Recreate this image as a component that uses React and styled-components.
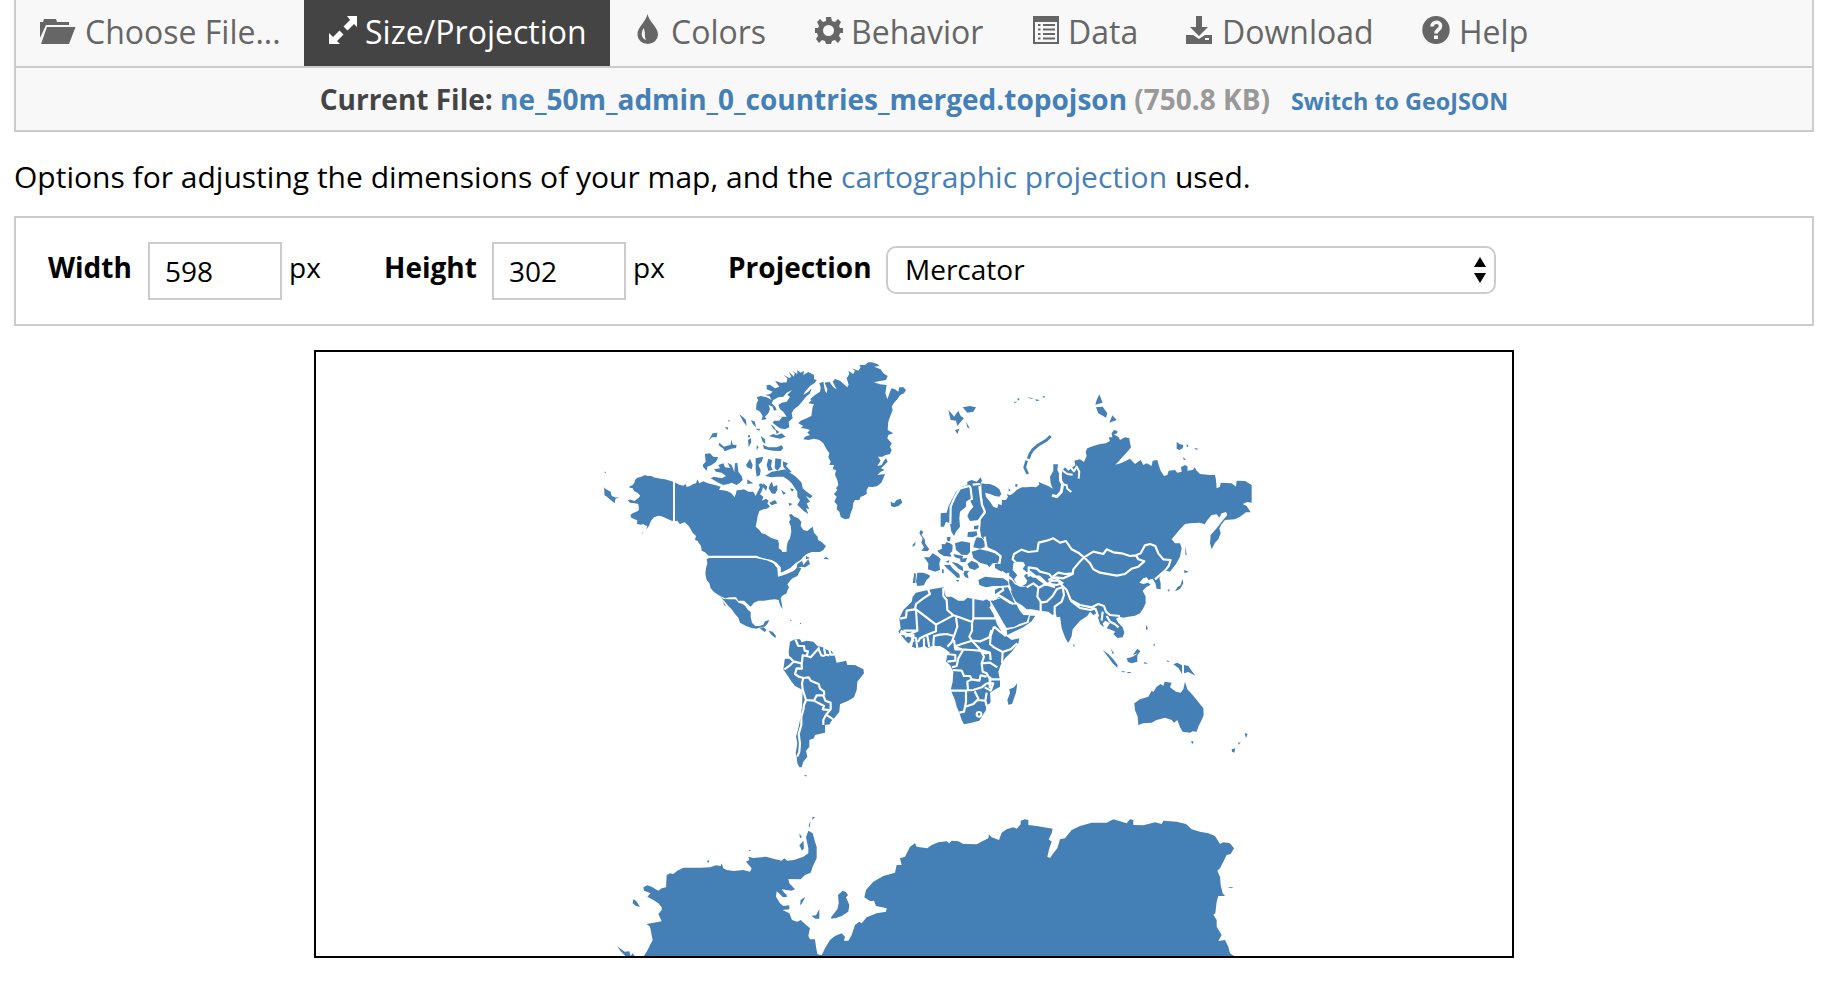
import React, { useState } from 'react';
import styled, { createGlobalStyle } from 'styled-components';

const GlobalStyle = createGlobalStyle`
  * {
    box-sizing: border-box;
  }

  body {
    margin: 0;
    background: white;
    color: black;
    font-family: 'Open Sans', sans-serif;
    font-size: 28px;
    overflow: hidden;
  }
`;

const Page = styled.div`
  width: 1800px;
  margin-left: 14px;
`;

const Header = styled.header`
  height: 132px;
  border: 2px solid #ccc;
  border-top: none;
  background: #f8f8f8;
`;

const Nav = styled.nav`
  display: flex;
  height: 68px;
  border-bottom: 2px solid #ccc;
`;

const Tab = styled.button`
  display: flex;
  flex-shrink: 0;
  width: ${props => props.$width}px;
  height: 66px;
  padding: 10px 0 0 24px;
  border: none;
  background: ${props => (props.$active ? '#444' : 'transparent')};
  color: ${props => (props.$active ? 'white' : '#666')};
  font-family: inherit;
  font-size: 32px;
  line-height: 44px;
  white-space: nowrap;
  cursor: pointer;
`;

const TabIcon = styled.svg`
  flex-shrink: 0;
  width: ${props => props.$width}px;
  height: 32px;
  margin: 4px 8px 0 0;
  fill: currentColor;
`;

const CurrentFile = styled.div`
  display: flex;
  align-items: baseline;
  justify-content: center;
  padding-top: 11px;
  line-height: 40px;
  font-weight: bold;
  color: #444;
  white-space: pre;
`;

const Link = styled.a`
  color: #4480b6;
  text-decoration: none;
  cursor: pointer;
`;

const SwitchLink = styled(Link)`
  margin-left: 21px;
  font-size: 23.33px;
`;

const FileSize = styled.span`
  color: #999;
`;

const Description = styled.p`
  margin: 25px 0 19px;
  line-height: 40px;
  font-size: 30.03px;
  white-space: nowrap;
`;

const Options = styled.form`
  display: flex;
  align-items: flex-start;
  height: 110px;
  padding: 24px 0 0 32px;
  border: 2px solid #ccc;
`;

const Label = styled.label`
  width: ${props => props.$width}px;
  padding-top: 5px;
  line-height: 40px;
  font-weight: bold;
`;

const NumberInput = styled.input`
  width: 134px;
  height: 58px;
  padding: 0 15px;
  border: 2px solid #ccc;
  font-family: inherit;
  font-size: 28px;
`;

const Unit = styled.span`
  width: ${props => props.$width}px;
  padding: 5px 0 0 7px;
  line-height: 40px;
`;

const SelectBox = styled.button`
  display: flex;
  align-items: center;
  justify-content: space-between;
  width: 610px;
  height: 48px;
  margin-top: 4px;
  padding: 0 7px 0 17px;
  border: 2px solid #ccc;
  border-radius: 10px;
  background: white;
  color: black;
  font-family: inherit;
  font-size: 28px;
  line-height: 38px;
`;

const SelectValue = styled.span`
  padding-bottom: 2px;
`;

const SelectArrows = styled.svg`
  width: 14px;
  height: 26px;
`;

const MapFrame = styled.div`
  width: 1200px;
  height: 608px;
  margin: 24px auto 0;
  border: 2px solid black;
`;

const MapSvg = styled.svg`
  display: block;
  width: 1196px;
  height: 604px;
`;

const Land = styled.path`
  fill: #4480b6;
`;

const Water = styled.path`
  fill: white;
`;

const Border = styled.path`
  fill: none;
  stroke: white;
  stroke-width: ${props => props.$width || 6.5};
  stroke-linejoin: round;
`;

const Ridge = styled.path`
  fill: none;
  stroke: #4480b6;
  stroke-width: ${props => props.$width};
  stroke-linejoin: round;
`;

const icons = {
  folder: (
    <TabIcon $width={37} viewBox="0 0 37 32">
      <path d="M0 24V8h3l1-3h12l1 3h12v3H6Z" />
      <path d="M7 13h28.500l-6.500 17H1Z" />
    </TabIcon>
  ),
  resize: (
    <TabIcon $width={29} viewBox="0 0 29 32">
      <path d="M19 2h10v11l-3-3-6.500 6.500-4-4L22 6ZM11.500 16.500l4 4L9 27l3 3H1V19l4 4Z" />
    </TabIcon>
  ),
  tint: (
    <TabIcon $width={29} viewBox="0 0 29 32">
      <path d="M13.500 0C15 8 24 13 24 20.500a10.300 9.500 0 0 1-20.600 0C3.400 13 12 8 13.500 0Z" />
      <path d="M9.500 14c-3 6-2 10 2.500 12-2-4 0-7-2.500-12Z" fill="#f8f8f8" />
    </TabIcon>
  ),
  cog: (
    <TabIcon $width={29} viewBox="0 0 29 32">
      <path
        fillRule="evenodd"
        d="M12 3h5l1 4 3 1 3-3 3 3-2 4 1 2h3v5h-3l-1 3 2 3-3 4-3-3-3 1-1 3h-5l-1-3-3-1-3 3-3-4 2-3-1-3H1v-5h3l1-2-2-4 3-3 3 3 3-1ZM14.500 11a5.500 5.500 0 1 0 0 11 5.500 5.500 0 0 0 0-11Z"
      />
    </TabIcon>
  ),
  list: (
    <TabIcon $width={29} viewBox="0 0 29 32">
      <path fillRule="evenodd" d="M2 2h26v28H2ZM4 8v20h22V8Z" />
      <path d="M7 10h2.500v2H7Zm5 0h12v2H12ZM7 14.500h2.500v2H7Zm5 0h12v2H12ZM7 19h2.500v2H7Zm5 0h12v2H12ZM7 23.500h2.500v2H7Zm5 0h12v2H12Z" />
    </TabIcon>
  ),
  download: (
    <TabIcon $width={30} viewBox="0 0 30 32">
      <path d="M12 2h6v11h6l-9 9-9-9h6Z" />
      <path fillRule="evenodd" d="M2 21h7l6 4 6-4h7v9H2ZM21 24v2h4v-2Z" />
    </TabIcon>
  ),
  help: (
    <TabIcon $width={30} viewBox="0 0 30 32">
      <ellipse cx="15" cy="16" rx="13.700" ry="14" />
      <path d="M11 12.500C11 7 19.500 7 19.500 12c0 4-4.500 3.500-4.500 7.500" fill="none" stroke="#f8f8f8" strokeWidth="3.600" />
      <path d="M13 21.500h4v3.500h-4Z" fill="#f8f8f8" />
    </TabIcon>
  )
};

const tabs = [
  { name: 'Choose File...', icon: 'folder', width: 288 },
  { name: 'Size/Projection', icon: 'resize', width: 306 },
  { name: 'Colors', icon: 'tint', width: 180 },
  { name: 'Behavior', icon: 'cog', width: 217 },
  { name: 'Data', icon: 'list', width: 153 },
  { name: 'Download', icon: 'download', width: 237 },
  { name: 'Help', icon: 'help', width: 160 }
];

const NorthAmerica = () => (
  <g transform="translate(590 350) scale(.33333)">
    <Land d="M250 395L240 392 225 388 212 386 190 382 185 378 172 378 165 375 152 381 142 383 135 390 133 398 128 405 117 410 120 413 128 415 133 424 142 428 150 436 148 442 140 448 134 453 122 449 113 450 120 458 134 460 145 462 147 480 142 484 128 490 121 496 124 503 134 508 142 511 141 522 152 524 160 522 165 526 172 528 168 538 160 546 174 532 177 527 183 512 192 502 205 497 215 499 228 505 245 512 250 513ZM158 548L164 544 152 556Z" />
    <Land d="M254 397L268 404 280 407 287 402 290 411 300 408 308 403 318 400 322 388 328 400 340 394 350 398 362 402 378 406 392 410 387 420 400 421 413 424 424 430 434 442 438 430 440 421 452 420 462 418 475 425 490 425 497 438 503 425 510 412 506 404 513 400 520 405 517 420 510 433 520 440 516 452 528 446 536 452 532 460 540 470 530 476 520 478 508 483 503 498 500 515 497 530 508 540 515 550 525 552 540 562 552 567 564 570 567 582 566 595 574 600 577 606 590 605 590 592 593 576 600 565 604 545 602 528 597 515 602 508 597 494 604 492 613 500 625 505 634 515 632 528 640 540 652 543 660 536 668 530 672 548 683 560 684 570 694 575 708 588 700 600 690 606 665 606 650 612 640 620 632 630 618 638 600 655 585 662 573 668 572 652 560 638 545 630 530 627 510 622 500 617 355 617 345 607 335 602 333 588 322 572 315 570 318 558 308 548 298 530 285 517 276 519 270 523 262 512 254 514Z" />
    <Border $width={6} d="M252 395V515" />
    <Land d="M356 624L498 624 515 628 530 631 550 640 562 655 564 680 575 677 590 672 612 662 622 652 634 655 622 678 608 685 602 690 592 703 597 712 592 722 590 730 576 738 572 745 575 760 578 778 570 765 566 750 555 748 540 749 522 752 505 752 492 758 482 770 470 760 462 752 445 752 438 742 420 742 405 745 395 740 385 735 372 726 362 715 358 700 350 690 346 672 348 655 352 640 350 628Z" />
    <Land d="M622 642L636 632 640 645 655 628 660 642 646 652 634 650 620 655ZM700 627L708 620 718 628ZM648 618L660 624 648 628Z" />
    <Land d="M388 738L400 747 418 748 436 748 446 758 458 762 466 768 474 780 482 786 482 800 486 818 496 828 508 828 520 824 525 814 538 810 532 822 524 830 512 832 500 836 485 834 468 828 450 818 445 803 435 792 425 778 415 768 405 755ZM398 752L408 768 403 766ZM508 834L520 832 530 840 524 846ZM535 842L548 845 558 858 556 864 545 855ZM600 808L606 812 601 812ZM630 819H633V822H630Z" />
    <Land d="M845 37L862 42 868 48 852 50 872 58 880 70 893 78 888 90 870 93 852 97 870 103 890 105 886 130 892 148 900 125 905 115 915 118 925 125 928 112 940 112 948 120 942 130 930 136 922 148 912 158 905 170 908 180 900 200 895 215 893 240 910 250 895 255 892 265 905 280 900 290 905 300 900 312 885 316 878 320 864 320 872 332 862 348 875 345 880 335 888 325 893 335 880 348 873 355 884 360 872 365 862 375 885 372 880 385 874 398 862 408 848 411 836 410 830 420 830 432 820 438 812 440 808 450 795 450 790 458 788 475 782 490 778 505 768 508 758 505 752 500 748 485 740 478 742 465 733 455 740 440 732 432 742 420 738 415 745 405 742 390 735 375 738 360 728 358 732 345 718 345 722 335 715 322 718 310 708 295 700 280 688 270 672 266 655 270 640 268 645 260 660 255 652 248 660 240 648 236 632 234 640 228 625 220 632 212 650 205 664 198 668 170 672 163 655 160 665 150 660 148 675 135 690 125 692 112 688 100 700 95 705 122 710 130 712 118 704 98 718 95 730 112 740 118 728 95 735 87 750 92 772 112 776 104 770 85 778 72 775 62 790 72 795 62 785 55 805 62 812 52 808 45 825 45 835 37Z" />
    <Land d="M530 105L540 104 555 115 568 110 560 100 555 92 572 98 590 97 592 85 580 74 598 84 604 80 596 65 612 80 614 70 606 62 622 72 622 60 632 68 642 62 640 75 655 66 672 75 672 88 680 90 675 98 660 108 645 125 640 135 655 125 665 115 660 130 648 140 636 155 625 168 612 178 605 190 608 205 596 215 598 232 585 238 570 235 560 228 548 218 552 212 568 212 576 202 560 195 570 200 590 200 580 185 570 178 565 165 575 158 590 155 600 140 592 135 606 120 590 128 580 140 565 142 550 150 545 160 556 170 560 180 552 182 548 170 536 165 540 178 535 190 525 200 530 208 515 210 518 198 510 185 498 178 500 160 505 150 500 142 512 138 530 142 545 150 538 138 525 135 540 132 548 125 530 118Z" />
    <Land d="M537 258L550 252 560 256 575 250 587 260 570 266 550 262ZM518 284L535 292 560 292 575 286 580 295 572 303 550 302 535 300 522 296ZM512 258L525 268 526 282 518 275ZM556 238L568 246 560 252ZM345 312L360 310 370 320 385 322 378 335 365 345 352 350 350 362 340 352 338 345 347 335ZM355 272L368 250 382 248 380 262 366 262ZM448 193L458 200 468 210 470 228 460 215ZM413 212L418 210 419 216ZM405 232L415 232 412 240ZM483 210L495 215 498 232 488 222ZM388 278L402 290 422 284 424 268 428 284 440 285 438 294 424 296 404 304 400 296 386 286ZM474 270L482 264 484 276 476 292ZM474 256H480V262H474ZM496 236L510 236 508 242ZM500 285L506 292 500 300ZM542 222L552 230 560 244 550 236Z" />
    <Land d="M385 345L400 340 405 352 420 354 413 338 425 345 433 366 435 340 442 338 445 365 455 378 458 390 448 400 440 405 425 398 415 402 400 405 385 398 362 385 372 380 395 385 408 378 395 368 378 365 372 358 390 355ZM468 345L480 326 488 345 485 358 472 352ZM497 325L520 320 515 335 505 345 512 360 510 375 500 380 497 360ZM472 388L482 395 490 400 472 402ZM535 326L546 330 543 348 548 360 535 362 530 345ZM556 325L574 328 572 350 562 362 554 354ZM578 334L594 340 588 348 605 366 596 368 580 350Z" />
    <Land d="M545 365L565 362 585 358 600 368 615 378 625 388 635 398 638 415 650 425 668 438 660 445 648 438 660 455 650 460 658 478 648 475 655 492 640 482 628 470 622 465 630 450 622 440 622 425 615 415 605 400 595 390 580 380 560 380 545 382 525 378ZM540 403L546 395 550 410 562 405 562 420 555 432 545 430 536 415ZM538 458L555 450 562 460 545 466ZM520 400L532 410 528 422 518 410ZM574 420L588 430 580 434ZM600 415L612 418 606 426ZM596 458L608 462 598 468Z" />
    <Land d="M42 412L48 418 62 425 65 438 78 443 88 440 76 448 74 460 62 450 48 438 44 437ZM42 365L48 366 46 370ZM902 455L912 460 920 450 932 446 937 458 925 468 912 472 903 468Z" />
  </g>
);

const SouthAmerica = () => (
  <g transform="translate(740 610) scale(.33333)">
    <Land d="M150 95L165 88 180 88 185 97 200 92 220 95 232 108 248 112 262 120 276 124 285 140 290 158 305 155 318 152 322 165 345 165 370 178 372 190 352 215 350 240 342 262 325 272 300 283 298 305 285 322 272 335 270 343 255 345 255 368 225 375 222 385 208 390 208 410 198 422 202 440 190 455 185 472 178 472 172 460 170 440 167 430 172 400 168 380 176 350 182 320 186 290 188 240 165 228 155 215 145 200 130 178 132 165 134 148 148 140 146 125ZM192 494L200 496 198 500Z" />
    <Border d="M133 143L148 142 160 154 184 160M133 178L150 166 160 156M166 88L175 108 192 108 194 122 204 124 200 138 188 136 185 165 186 176 170 175 165 192 176 200 190 204M200 138L212 142 228 124 238 112M236 118L244 136 254 138M252 115L256 134 268 136M268 120L272 134 282 134M190 204L206 202 212 212 236 222 240 236 252 244 253 256M190 204L186 220 188 238 198 270 192 285 190 300 184 320 184 345 176 372 180 400 178 425 172 440M198 270L222 272 230 256 250 256 256 272 272 278 272 298 258 314 250 330 250 345M222 272L252 288 248 298 268 300M258 314L280 328" />
  </g>
);

const Europe = () => (
  <g transform="translate(880 350) scale(.33333)">
    <Land d="M182 530L182 490 200 488 205 470 215 450 228 425 245 410 262 405 262 395 275 390 290 395 302 382 306 392 302 400 300 412 303 440 312 470 315 488 298 510 270 513 262 498 268 485 280 470 272 455 274 445 258 455 258 470 240 485 238 505 240 530 228 545 222 558 214 545 210 520 198 515 192 530Z" />
    <Border d="M211 522L212 470 225 440 240 415 268 408 272 415 276 450M278 404L300 402M298 408L302 440 306 465 315 486 296 512" />
    <Land d="M178 610L172 602 186 596 185 582 195 583 200 576 210 580 218 585 217 604 210 610 214 620 192 618ZM132 622L148 622 158 610 175 620 182 628 178 640 180 660 165 665 144 658 145 640ZM112 668L130 668 148 675 150 680 138 692 132 706 112 708 108 695ZM103 668L108 672 106 700 98 698ZM122 540L130 545 125 555 134 568 136 582 148 598 142 604 124 602 132 592 124 578 128 565 118 550ZM98 584L107 575 105 586 98 591ZM200 562L212 560 210 574 202 572Z" />
    <Land d="M225 580L245 574 270 578 270 606 262 615 245 614 228 600ZM284 575L290 562 305 564 314 575 314 592 300 596 280 592ZM275 605L300 598 320 602 345 610 360 622 355 638 338 640 328 652 322 644 300 638 280 624ZM264 546L290 544 292 556 278 562 262 560ZM282 528L296 526 294 538 282 538ZM262 642L275 632 292 640 298 652 284 660 268 655ZM220 612L250 618 245 628 225 622ZM196 636L208 630 206 638ZM240 626L262 624 256 636 242 636Z" />
    <Border d="M314 560L316 572 320 594 345 605 362 618 358 642" />
    <Land d="M192 645L210 644 220 658 238 672 240 682 232 684 216 668 202 656ZM214 635L232 640 248 650 250 664 236 656ZM254 662L268 662 262 670 266 685 256 682 250 672ZM228 690L238 690 234 696ZM186 658H191V670H186Z" />
    <Land d="M295 690L315 680 345 683 370 685 384 695 386 706 360 708 340 708 318 712 298 705Z" />
    <Land d="M345 720L356 714 384 712 396 738 404 760 390 758 366 740 345 748ZM332 752L345 750 362 744 390 762 410 764 418 780 430 795 447 796 440 815 418 822 404 830 380 834 370 818 360 800 345 775ZM380 840L404 834 446 818 450 797 466 797 455 814 430 832 400 846 382 855Z" />
    <Border d="M340 740L370 720 366 708M338 750L358 736 400 762" />
    <Land d="M205 180L216 192 222 200 235 182 242 198 252 205 245 212 232 228 228 212 212 210ZM248 172L270 168 288 172 280 185 262 188ZM225 240L238 236 232 252ZM258 215L270 236 262 232ZM658 133L668 158 646 164 650 150ZM648 172L668 170 682 190 678 203 655 190ZM697 196L710 210 688 218ZM402 156L412 154 404 160ZM412 145L420 146 414 152ZM440 140L462 146 452 146ZM465 148L480 150 470 154ZM486 140L495 138 493 144ZM386 415L392 422 386 424ZM406 402H412V410H406Z" />
    <Ridge $width={9} d="M512 258L500 270 475 285 458 300 450 312 445 326" />
    <Ridge $width={8} d="M440 332L434 352 443 372" />
  </g>
);

const Asia = () => (
  <g transform="translate(880 350) scale(.33333)">
    <Land d="M304 400L318 402 330 402 345 408 358 418 364 432 358 440 345 438 330 432 316 428 318 440 330 455 340 470 352 475 355 462 365 466 366 450 378 450 384 440 380 432 390 436 400 430 410 420 425 412 440 412 455 410 468 412 478 404 476 396 490 402 505 408 518 416 512 400 510 380 520 362 520 343 534 343 532 360 538 372 545 365 555 352 565 362 578 352 586 346 583 332 600 328 612 336 620 318 617 305 622 295 640 288 660 282 678 280 690 272 686 262 697 262 695 250 702 240 712 243 712 250 702 253 716 262 720 270 735 262 748 265 750 280 753 292 742 305 728 320 715 335 706 344 722 340 738 332 750 326 765 342 782 330 790 345 800 340 815 348 818 332 832 330 836 345 842 362 852 378 862 375 866 362 885 360 892 368 905 365 903 352 915 345 923 350 922 362 938 360 945 352 948 360 960 372 990 375 1005 375 1008 390 1010 415 1020 410 1022 398 1055 400 1068 410 1070 392 1095 393 1115 405 1115 458 1102 456 1088 462 1100 468 1112 487 1098 487 1080 500 1065 508 1035 510 1025 522 1018 535 1022 550 1015 568 1005 578 995 598 990 580 992 555 1010 535 1025 515 1042 495 1038 486 1025 490 1018 503 1010 493 995 495 982 510 974 523 960 518 930 520 915 522 900 538 875 568 885 580 900 580 905 595 900 620 888 642 870 665 858 662 845 672 838 684 842 700 842 718 830 716 826 700 818 686 806 690 800 682 790 685 778 698 790 702 805 698 812 704 798 712 788 722 797 740 797 760 790 775 780 790 765 797 745 800 730 803 718 800 708 806 715 818 728 832 733 848 728 862 712 864 700 852 706 845 695 840 680 835 690 820 676 812 668 820 672 832 660 822 655 805 650 790 640 795 630 785 622 798 600 812 578 838 575 858 570 870 564 878 555 862 545 835 542 812 540 800 530 802 528 792 518 795 505 785 480 782 455 778 440 778 425 765 408 755 398 738 390 715 384 700 386 685 395 690 404 702 420 710 440 710 425 706 408 700 398 688 382 672 362 664 345 654 345 642 357 640 362 620 345 606 322 596 316 572 304 560 300 540 302 520 302 508 318 488 310 465 305 435Z" />
    <Water d="M400 640L412 635 430 636 436 646 428 656 442 668 432 678 442 692 438 702 425 708 410 702 402 688 412 676 398 660Z" />
    <Border $width={9} d="M543 350L541 375 542 392 548 402 544 425 530 440 516 436" />
    <Border $width={6} d="M546 402L560 406 562 416 574 426M548 362L562 372 578 374M572 352L582 364 590 350 598 365 596 386" />
    <Border d="M410 640L398 628 402 612 425 599 445 606 472 603 476 578 500 572 520 565 540 578 558 573 575 598 595 608 612 622M612 622L640 605 670 612 680 598 700 607 725 610 750 618 768 616 782 610 795 586 810 582 826 588 835 610 850 628 872 630 866 648 855 662 825 688M612 622L630 640 640 658 660 668 710 677 735 672 755 656 775 650 793 634 775 628 768 616M612 622L595 640 580 658 578 672 550 685 528 682M446 680L446 652 470 656 480 665 508 672 515 682 535 668 555 672 578 670M446 662L480 690 500 705 515 692 535 692 550 700M440 668L460 680 478 680 505 705 525 712M440 712L460 700 475 712 472 740 482 755 482 784M475 714L500 700 530 705 545 700M482 758L500 755 518 738 530 718 546 712M524 796L524 770 545 755 552 735 548 712M528 682L545 705 560 720 572 750 600 765 635 772 655 762 672 768 678 785 690 795 720 798M572 752L600 774 632 780 646 775M646 775L655 800M668 785L665 812M680 798L690 815 704 822 716 832M365 665L396 688" />
    <Border $width={7} d="M505 690L525 682 548 702M384 668L384 700 392 722" />
  </g>
);

const Africa = () => (
  <g transform="translate(890 530) scale(.33333)">
    <Land d="M78 188L100 183 125 178 160 172 165 190 168 200 185 200 205 212 222 212 232 203 255 208 280 212 290 208 300 215 302 228 298 232 310 252 316 268 322 285 335 305 345 315 365 330 388 325 385 340 365 365 345 385 332 405 325 425 330 450 330 470 312 480 300 488 302 515 298 522 288 525 288 540 268 572 245 578 222 583 215 570 208 548 200 530 195 510 182 480 188 455 190 425 180 405 168 395 172 375 180 368 165 356 150 348 138 348 130 345 115 355 105 348 80 355 65 350 45 330 25 305 32 295 28 265 40 240 55 225 65 215 68 200Z" />
    <Border d="M114 178L120 192 100 205 78 222 75 238 50 242 48 262 30 266M78 238L82 302 40 302M78 238L138 284M138 284L190 256 172 240 170 210 160 198 160 174M190 256L208 262 245 275M250 207V265L246 278M250 265H316M246 278L246 302 238 320 246 332 215 342 192 350M198 262L202 290 192 318M138 284L138 304 108 316 90 325 84 336M192 318L170 312 150 314 132 318 130 345M192 318L186 335 172 350M192 330L196 358 215 358M192 350L215 358 245 360 268 362 285 370M246 332L272 334 298 322 304 300M246 332L272 360 300 368M312 290L302 318 300 342 312 352 338 366 362 358 382 340M312 290L330 305 348 318M338 366L336 400M275 366L282 380 275 400 300 398 322 412M285 370L300 368 302 390M275 400L278 425 290 430 300 448 330 448M188 420L215 422 222 438 240 438 245 448 232 455 234 480M180 482L215 482 250 480 275 472 290 460M245 448L268 452 272 436 290 440M228 482L228 515 222 545 208 548M226 530L250 522 262 510 285 512M254 484L266 508M290 460L310 460 302 482 284 472M290 488L286 512 290 528M45 320L85 300M32 302L60 318 78 325 82 355M55 345L72 330M102 325V355M112 318L118 352M218 362L205 385 200 408 186 412M170 372L196 375 196 392 172 395" />
    <Border $width={8} d="M300 440L300 475M30 310L70 316 62 350" />
    <Water d="M257 553A10 10 0 1 0 277 553A10 10 0 1 0 257 553Z" />
    <Land d="M263 553A4 4 0 1 0 271 553A4 4 0 1 0 263 553ZM382 460L378 488 366 522 355 524 352 510 360 490 358 478 372 472ZM550 342L555 348 550 350Z" />
  </g>
);

const Oceania = () => (
  <g transform="translate(890 530) scale(.33333)">
    <Land d="M733 520L750 508 775 500 785 482 790 486 800 470 812 462 820 468 824 455 845 458 840 472 858 485 872 488 880 478 885 455 892 478 908 495 928 520 940 535 941 555 935 570 925 590 920 605 908 604 900 608 878 605 870 592 862 570 852 578 845 570 825 563 800 570 785 578 760 580 745 585 743 560 735 540ZM903 634L911 634 907 643Z" />
    <Land d="M638 360L655 372 670 388 683 405 682 413 668 400 655 382ZM662 355L672 370 668 372ZM694 422L708 426 697 427ZM712 426H722V429H712ZM710 385L724 382 735 366 742 356 751 364 742 376 742 395 725 400 714 396ZM768 284L774 296 768 300ZM790 344L796 340 792 350ZM832 390L838 396 832 396ZM762 396L774 400 764 402ZM850 403L862 398 876 406 876 432 866 415ZM882 405L895 408 905 422 916 437 895 426 882 430Z" />
    <Water d="M708 377L728 380 744 370 730 374Z" />
    <Land d="M886 48L890 76 886 74ZM882 120L896 125 884 130ZM877 146L880 160 870 177 855 184 862 172 872 165ZM832 180L840 178 836 185ZM1064 609L1073 612 1068 624ZM1044 638L1052 637 1046 644ZM1025 658L1036 655 1033 668 1026 665Z" />
    <Land d="M860 -265L868 -258 880 -255 878 -245 868 -240 860 -244ZM890 -258L896 -252 890 -248ZM912 -247L926 -243 918 -241ZM878 -218L888 -212 882 -210Z" />
  </g>
);

const Antarctica = () => (
  <g transform="translate(590 780) scale(.33333)">
    <Land d="M160 530L170 515 188 480 183 455 180 440 170 432 215 424 205 402 215 390 215 382 205 370 190 360 172 350 182 340 162 332 160 322 172 316 185 320 192 325 205 332 215 325 228 322 230 285 240 280 250 282 262 272 280 263 330 263 360 262 378 256 392 258 395 250 400 265 410 270 432 273 460 270 480 275 485 265 468 245 478 240 475 230 490 234 528 230 550 236 575 242 583 235 592 242 612 240 640 230 655 220 655 205 648 172 655 152 668 160 675 185 680 200 680 235 668 260 662 278 645 285 632 298 595 297 598 310 615 328 605 332 590 330 575 328 592 350 580 352 560 334 558 350 570 370 580 378 598 376 598 388 578 390 598 400 606 420 622 425 632 420 645 432 660 445 655 468 660 478 675 478 678 500 682 522 695 526 705 505 720 480 735 468 755 460 765 470 762 482 775 482 785 465 795 435 808 425 815 430 830 412 860 400 888 395 890 385 858 378 852 362 840 363 823 352 828 330 850 305 880 288 915 278 920 255 935 255 930 235 945 230 960 200 975 190 980 200 1012 205 1025 195 1045 187 1070 184 1078 190 1085 182 1105 184 1120 192 1160 193 1180 182 1195 175 1197 163 1205 172 1227 180 1235 158 1250 148 1270 142 1280 146 1292 133 1292 122 1305 118 1315 120 1315 135 1340 138 1388 146 1385 160 1376 178 1385 185 1378 205 1372 230 1380 234 1390 220 1402 205 1410 178 1425 175 1445 150 1470 138 1505 128 1550 128 1570 118 1610 130 1620 118 1630 120 1630 135 1660 136 1695 127 1715 132 1720 122 1760 125 1788 132 1805 148 1830 155 1855 160 1875 168 1890 192 1900 187 1920 190 1932 205 1922 222 1910 225 1900 245 1890 265 1882 272 1890 290 1892 315 1898 340 1905 348 1885 348 1880 365 1876 400 1870 404 1880 420 1880 440 1895 465 1885 483 1905 480 1915 500 1920 520 1935 530Z" />
    <Land d="M723 412L742 388 746 370 744 345 758 332 768 336 774 346 768 352 778 375 775 395 755 408 738 414 725 416ZM130 358L138 362 150 380 138 378 128 370ZM82 499L104 515 118 514 122 528H106L92 514ZM122 528L128 520 134 528ZM630 376L632 360 646 350 636 370ZM664 407L678 406 688 388 688 416 676 416ZM565 328L592 346 578 350ZM628 196L640 182 642 205 636 212ZM628 160L636 172 630 174ZM668 110L675 112 666 120ZM656 136L662 122 658 145ZM350 244L358 240 356 248ZM476 209L484 212 478 214ZM1916 321H1928V323H1916Z" />
  </g>
);

const WorldMap = () => (
  <MapSvg viewBox="316 352 1196 604">
    <NorthAmerica />
    <SouthAmerica />
    <Asia />
    <Europe />
    <Africa />
    <Oceania />
    <Antarctica />
  </MapSvg>
);

const App = () => {
  const [activeTab, setActiveTab] = useState('Size/Projection');
  const [width, setWidth] = useState('598');
  const [height, setHeight] = useState('302');

  return (
    <Page>
      <GlobalStyle />
      <Header>
        <Nav>
          {tabs.map(tab => (
            <Tab
              key={tab.name}
              $width={tab.width}
              $active={tab.name === activeTab}
              onClick={() => setActiveTab(tab.name)}
            >
              {icons[tab.icon]}
              {tab.name}
            </Tab>
          ))}
        </Nav>
        <CurrentFile>
          <span>Current File: </span>
          <Link>ne_50m_admin_0_countries_merged.topojson</Link>
          <FileSize> (750.8 KB)</FileSize>
          <SwitchLink>Switch to GeoJSON</SwitchLink>
        </CurrentFile>
      </Header>
      <Description>
        Options for adjusting the dimensions of your map, and the <Link>cartographic projection</Link> used.
      </Description>
      <Options>
        <Label $width={100}>Width</Label>
        <NumberInput value={width} onChange={e => setWidth(e.target.value)} />
        <Unit $width={102}>px</Unit>
        <Label $width={108}>Height</Label>
        <NumberInput value={height} onChange={e => setHeight(e.target.value)} />
        <Unit $width={102}>px</Unit>
        <Label $width={158}>Projection</Label>
        <SelectBox type="button">
          <SelectValue>Mercator</SelectValue>
          <SelectArrows viewBox="0 0 14 26">
            <path d="M7 0l6 10H1ZM7 26l6-10H1Z" />
          </SelectArrows>
        </SelectBox>
      </Options>
      <MapFrame>
        <WorldMap />
      </MapFrame>
    </Page>
  );
};

export default App;
